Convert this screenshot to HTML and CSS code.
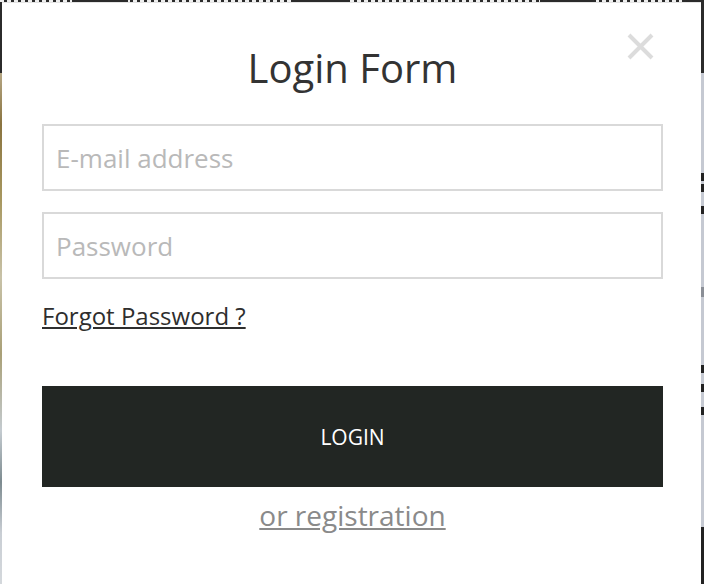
FILE: index.html
```html
<!DOCTYPE html>
<html lang="en">
<head>
<meta charset="utf-8">
<title>Login Form</title>
<link rel="stylesheet" href="styles.css">
</head>
<body>
<div class="page">
  <header class="topbar">
    <div class="nav-fragments" aria-hidden="true"></div>
  </header>
  <div class="content">
    <div class="side-left"></div>
    <div class="side-right"></div>
  </div>
</div>

<div class="modal">
  <button class="close" type="button" aria-label="Close">
    <svg width="27" height="27" viewBox="0 0 27 27"><path d="M2 2 L25 25 M25 2 L2 25" stroke="#dcdcdc" stroke-width="4" fill="none"/></svg>
  </button>
  <h1 class="title">Login Form</h1>
  <form class="form">
    <input class="field" type="email" placeholder="E-mail address">
    <input class="field" type="password" placeholder="Password">
    <a class="forgot" href="#">Forgot Password ?</a>
    <button class="login" type="button">LOGIN</button>
    <a class="register" href="#">or registration</a>
  </form>
</div>
</body>
</html>
```

FILE: styles.css
```css
html, body {
  margin: 0;
  padding: 0;
  height: 100%;
  overflow: hidden;
}
body {
  font-family: "Open Sans", "Liberation Sans", sans-serif;
  background: #c6cad3;
}
.page {
  display: flex;
  flex-direction: column;
  height: 100%;
}
.topbar {
  height: 73px;
  background: #2b2b2b;
  overflow: hidden;
}
.nav-fragments {
  height: 2px;
  background:
    linear-gradient(90deg, transparent 0, transparent 72px, #2b2b2b 72px, #2b2b2b 128px, transparent 128px, transparent 292px, #2b2b2b 292px, #2b2b2b 348px, transparent 348px, transparent 540px, #2b2b2b 540px, #2b2b2b 596px, transparent 596px, transparent 682px, #2b2b2b 682px),
    repeating-linear-gradient(90deg, #eee 0, #eee 4px, #2b2b2b 4px, #2b2b2b 7px);
}
.content {
  flex: 1;
  display: flex;
  justify-content: space-between;
}
.side-left {
  width: 3px;
  background: linear-gradient(#b5a684 0%, #8a7440 10%, #a89860 25%, #c8c2a8 40%, #a9a077 55%, #c4cbd0 70%, #7d8b90 80%, #c9ced4 90%, #d4d8dc 100%);
}
.side-right {
  width: 3px;
  background: linear-gradient(
    #c5c9d2 0, #c5c9d2 100px, #222 100px, #222 108px, #c5c9d2 108px,
    #c5c9d2 111px, #222 111px, #222 119px, #c5c9d2 119px,
    #c5c9d2 133px, #222 133px, #222 141px, #c5c9d2 141px,
    #c5c9d2 214px, #8a8e96 214px, #8a8e96 224px, #c5c9d2 224px,
    #c5c9d2 292px, #222 292px, #222 300px, #c5c9d2 300px,
    #c5c9d2 311px, #222 311px, #222 319px, #c5c9d2 319px,
    #c5c9d2 334px, #222 334px, #222 342px, #c5c9d2 342px,
    #c5c9d2 454px, #222 454px);
}
.modal {
  position: absolute;
  top: 2px;
  left: 2px;
  right: 3px;
  bottom: -20px;
  background: #fff;
  border-top: 1px solid #e4e4e4;
  padding: 38px 38px 0 40px;
  box-sizing: border-box;
}
.close {
  position: absolute;
  top: 30px;
  right: 47px;
  width: 27px;
  height: 27px;
  padding: 0;
  border: 0;
  background: none;
  display: block;
}
.close svg { display: block; }
.title {
  margin: 0;
  text-align: center;
  font-size: 40px;
  line-height: 54px;
  font-weight: 400;
  color: #333;
}
.form {
  display: flex;
  flex-direction: column;
  align-items: stretch;
  margin-top: 29px;
}
.field {
  height: 67px;
  box-sizing: border-box;
  border: 2px solid #d9d9d9;
  padding: 0 12px;
  margin: 0 0 21px 0;
  font-family: "Open Sans", "Liberation Sans", sans-serif;
  font-size: 26px;
  color: #333;
  outline: none;
}
.field::placeholder { color: #b9b9b9; }
.forgot {
  align-self: flex-start;
  margin-top: 0;
  font-size: 24px;
  line-height: 32px;
  color: #2e2e2e;
  text-decoration: underline;
}
.login {
  margin-top: 54px;
  height: 101px;
  border: 0;
  background: #222623;
  color: #fff;
  font-family: "Open Sans", "Liberation Sans", sans-serif;
  font-size: 21px;
}
.register {
  align-self: center;
  margin-top: 9px;
  font-size: 28px;
  line-height: 38px;
  color: #8a8a8a;
  text-decoration: underline;
}
```
